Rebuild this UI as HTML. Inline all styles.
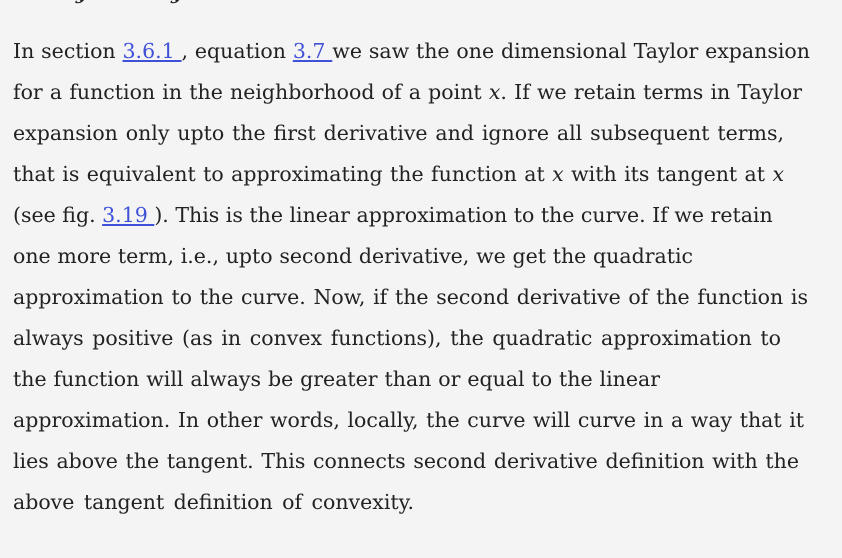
<!DOCTYPE html>
<html><head><meta charset="utf-8"><style>
body{margin:0;background:#f4f4f4;width:842px;height:558px;overflow:hidden;position:relative}
.l{position:absolute;left:13px;font-family:"DejaVu Serif","Liberation Serif",serif;font-size:20.5px;color:#222;white-space:nowrap;text-align:justify;text-align-last:justify;line-height:30px;height:30px}
a{color:#3f51d6;text-decoration:underline;text-underline-offset:2px}
i{font-style:italic}
.h{position:absolute;top:-20px;left:13px;font-family:"DejaVu Serif",serif;font-weight:bold;font-style:italic;font-size:20px;color:#222}
</style></head><body>
<div class="h">&nbsp;&nbsp;&nbsp;&nbsp;&nbsp;&nbsp;&nbsp;&nbsp;&nbsp;y&nbsp;&nbsp;&nbsp;&nbsp;&nbsp;&nbsp;&nbsp;&nbsp;&nbsp;&nbsp;&nbsp;&nbsp;y</div>
<div class="l" style="top:36px;width:797px">In section <a>3.6.1 </a>, equation <a>3.7 </a>we saw the one dimensional Taylor expansion</div>
<div class="l" style="top:77px;width:789px">for a function in the neighborhood of a point <i>x</i>. If we retain terms in Taylor</div>
<div class="l" style="top:118px;width:771px">expansion only upto the first derivative and ignore all subsequent terms,</div>
<div class="l" style="top:159px;width:771px">that is equivalent to approximating the function at <i>x</i> with its tangent at <i>x</i></div>
<div class="l" style="top:200px;width:759px">(see fig. <a>3.19 </a>). This is the linear approximation to the curve. If we retain</div>
<div class="l" style="top:241px;width:680px">one more term, i.e., upto second derivative, we get the quadratic</div>
<div class="l" style="top:282px;width:795px">approximation to the curve. Now, if the second derivative of the function is</div>
<div class="l" style="top:323px;width:768px">always positive (as in convex functions), the quadratic approximation to</div>
<div class="l" style="top:364px;width:647px">the function will always be greater than or equal to the linear</div>
<div class="l" style="top:405px;width:791px">approximation. In other words, locally, the curve will curve in a way that it</div>
<div class="l" style="top:446px;width:786px">lies above the tangent. This connects second derivative definition with the</div>
<div class="l" style="top:487px;width:401px">above tangent definition of convexity.</div>
</body></html>
